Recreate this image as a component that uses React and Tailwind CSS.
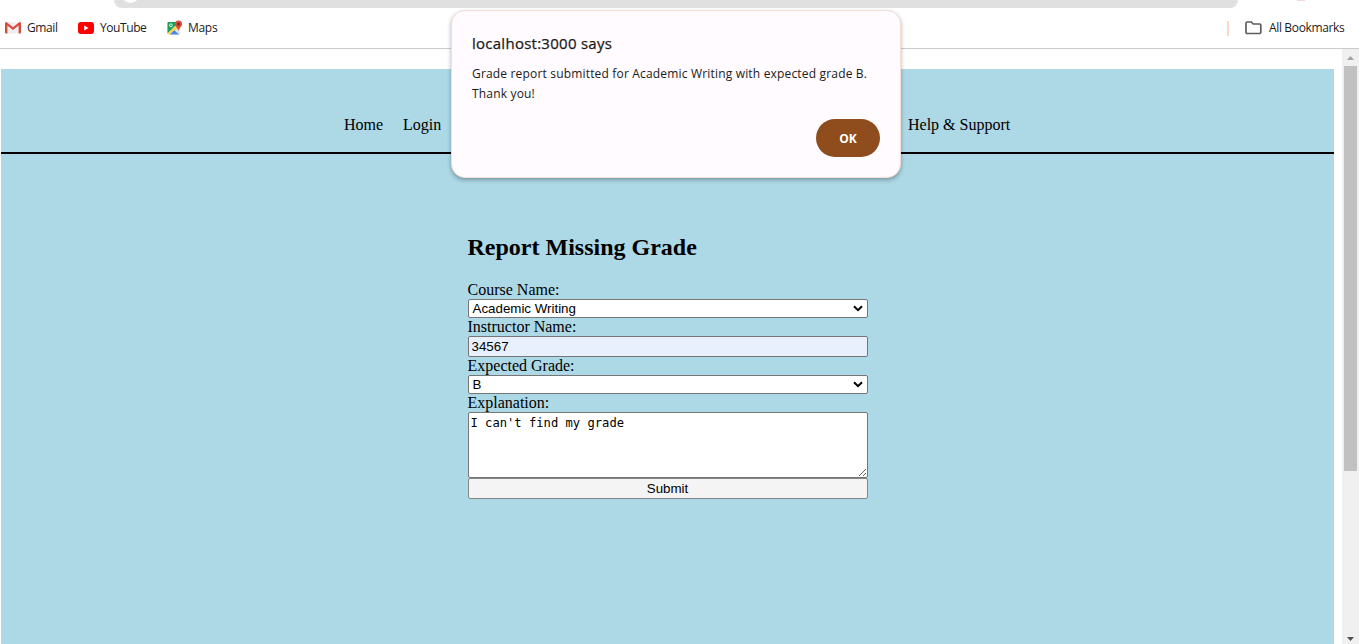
import React from "react";

function GmailIcon() {
  return (
    <svg width="16" height="12" viewBox="0 0 16 12" className="shrink-0">
      <rect x="0.5" y="0.5" width="15" height="11" rx="1" fill="#eeeeee" />
      <path d="M0 1.2h2.4V11.5H1Q0 11.5 0 10.5zM13.6 1.2H16v9.3q0 1-1 1h-1.4z" fill="#d54b3d" />
      <path d="M1.1 1.2 8 6.6l6.900-5.400" fill="none" stroke="#dc4a3d" strokeWidth="2.100" strokeLinecap="round" />
    </svg>
  );
}

function YouTubeIcon() {
  return (
    <svg width="16" height="12" viewBox="0 0 16 12" className="shrink-0">
      <rect width="16" height="12" rx="3" fill="#ff0000" />
      <path d="M6.200 3.500v5L10.600 6z" fill="#ffffff" />
    </svg>
  );
}

function MapsIcon() {
  return (
    <svg width="16" height="16" viewBox="0 0 16 16" className="shrink-0">
      <path d="M1.500 2H13v12.500H1.500Q.5 14.500.5 13.500V3q0-1 1-1z" fill="#e2e2e2" />
      <path d="M1.500 2H12L.5 13.500V3q0-1 1-1z" fill="#1f9d57" />
      <path d="M.8 13.300 10.500 4l2 2-8.500 8.500H2z" fill="#fdd44c" />
      <path d="M3 14.500 7.300 10.200l4.700 4.300z" fill="#4285f4" />
      <circle cx="3.900" cy="5.300" r="1.400" fill="none" stroke="#ffffff" strokeWidth="0.900" />
      <path d="M11.500.5a3.600 3.600 0 0 1 3.600 3.600c0 2.700-2.900 3.700-3.600 7-.7-3.300-3.600-4.300-3.600-7A3.600 3.600 0 0 1 11.500.5z" fill="#dc4b3e" />
      <circle cx="11.500" cy="4.100" r="1.300" fill="#7b231e" />
    </svg>
  );
}

function FolderIcon() {
  return (
    <svg width="17" height="14" viewBox="0 0 17 14" className="shrink-0">
      <path d="M1 2.500Q1 1 2.200 1H6.300L8.200 3H14.600Q15.800 3 15.800 4.200V11.300Q15.800 12.500 14.600 12.500H2.200Q1 12.500 1 11.300z" fill="none" stroke="#5f5c5c" strokeWidth="1.700" />
    </svg>
  );
}

function BookmarksBar() {
  return (
    <header className="h-[49px] border-b border-[#cacaca] bg-white">
      <div className="relative ml-[114px] h-2 w-[1124px] overflow-hidden rounded-b-[18px] bg-[#e0e0e0]">
        <div className="absolute -top-[14px] left-[8px] size-[17px] rounded-full bg-white" />
      </div>
      <div className="absolute top-0 left-[1297px] h-px w-[8px] bg-[#f9d5dc]" />
      <div className="flex h-10 items-center pl-[5px] font-['Open_Sans',sans-serif] text-[12px] text-[#1f1b1b]">
        <GmailIcon />
        <span className="ml-[6px] w-[51px] tracking-[-0.4px]">Gmail</span>
        <YouTubeIcon />
        <span className="ml-[6px] w-[67px] tracking-[-0.42px]">YouTube</span>
        <MapsIcon />
        <span className="ml-[5px] tracking-[-0.3px]">Maps</span>
        <span className="ml-auto h-[15px] w-[2px] bg-[#fbd9c6]" />
        <span className="ml-[16px] flex w-[24px]"><FolderIcon /></span>
        <span className="w-[90px] whitespace-nowrap tracking-[-0.35px]">All Bookmarks</span>
      </div>
    </header>
  );
}

function SelectField({ label, value }) {
  return (
    <>
      <label className="h-[18px] leading-[18px]">{label}</label>
      <div className="flex h-[19px] items-center justify-between rounded-[2px] border border-[#767676] bg-white pr-[4px] pl-[4px] font-['Liberation_Sans',sans-serif] text-[13.333px] tracking-normal">
        <span>{value}</span>
        <svg width="10" height="7" viewBox="0 0 10 7">
          <path d="M1 1.200 5 5.200l4-4" fill="none" stroke="#000000" strokeWidth="2" />
        </svg>
      </div>
    </>
  );
}

function GradeForm() {
  return (
    <form className="mx-auto flex w-[400px] flex-col text-[16px]">
      <h2 className="mb-[20px] h-[27px] text-[24px] leading-[27px] font-bold">Report Missing Grade</h2>
      <SelectField label="Course Name:" value="Academic Writing" />
      <label className="h-[18px] leading-[18px]">Instructor Name:</label>
      <input
        readOnly
        value="34567"
        className="h-[21px] rounded-[2px] border border-[#767676] bg-[#e8f0fe] px-[3px] font-['Liberation_Sans',sans-serif] text-[13.333px]"
      />
      <SelectField label="Expected Grade:" value="B" />
      <label className="h-[18px] leading-[18px]">Explanation:</label>
      <textarea
        readOnly
        value="I can't find my grade"
        className="h-[66px] resize rounded-[2px] border border-[#767676] bg-white p-[2px] font-['DejaVu_Sans_Mono',monospace] text-[12.150px] leading-[16px]"
      />
      <button
        type="button"
        className="flex h-[21px] items-center justify-center rounded-[2px] border border-[#858585] bg-[#f4f4f4] font-['Liberation_Sans',sans-serif] text-[13.333px]"
      >
        Submit
      </button>
    </form>
  );
}

function Scrollbar() {
  return (
    <aside className="flex w-[17px] flex-col items-center bg-[#f0f0f0]">
      <div className="flex h-[17px] items-center">
        <svg width="7" height="4" viewBox="0 0 7 4"><path d="M0 4 3.500 0 7 4z" fill="#a3a3a3" /></svg>
      </div>
      <div className="h-[405px] w-[13px] bg-[#c1c1c1]" />
      <svg className="mt-auto mb-[3px]" width="7" height="4" viewBox="0 0 7 4"><path d="M0 0h7L3.500 4z" fill="#505050" /></svg>
    </aside>
  );
}

function AlertDialog() {
  return (
    <div role="alertdialog" className="absolute top-[10px] left-[451px] flex h-[168px] w-[450px] flex-col rounded-[14px] border border-[#f3ded6] bg-[#fffbff] px-5 pt-[22px] font-['Open_Sans',sans-serif] text-[#201a18] shadow-[0_2px_4px_rgba(0,0,0,0.3)]">
      <h1 className="h-[20px] text-[15px] leading-[20px] font-medium tracking-[0.26px] whitespace-nowrap [-webkit-text-stroke:0.25px_#201a18]">localhost:3000 says</h1>
      <p className="mt-[11px] text-[12px] leading-5 tracking-[0.175px] whitespace-nowrap">
        Grade report submitted for Academic Writing with expected grade B.
        <br />
        Thank you!
      </p>
      <button type="button" className="mt-[15px] h-[38px] w-[64px] self-end rounded-full bg-[#8f4c1c] pt-px text-[12px] font-bold text-white">OK</button>
    </div>
  );
}

export default function App() {
  return (
    <div className="relative flex h-[644px] w-[1359px] flex-col overflow-hidden bg-white text-black">
      <BookmarksBar />
      <div className="flex flex-1">
        <main className="mt-5 ml-px w-[1333px] bg-[#add8e6] font-['Liberation_Serif',serif]">
          <nav className="flex h-[85px] items-start border-b-2 border-black pt-[47px] pl-[343px] text-[16px] leading-[18px] whitespace-nowrap">
            <a className="w-[59px]">Home</a>
            <a className="w-[505px]">Login</a>
            <a>Help &amp; Support</a>
          </nav>
          <div className="pt-[80px]">
            <GradeForm />
          </div>
        </main>
        <div className="flex-1" />
        <Scrollbar />
      </div>
      <AlertDialog />
    </div>
  );
}
